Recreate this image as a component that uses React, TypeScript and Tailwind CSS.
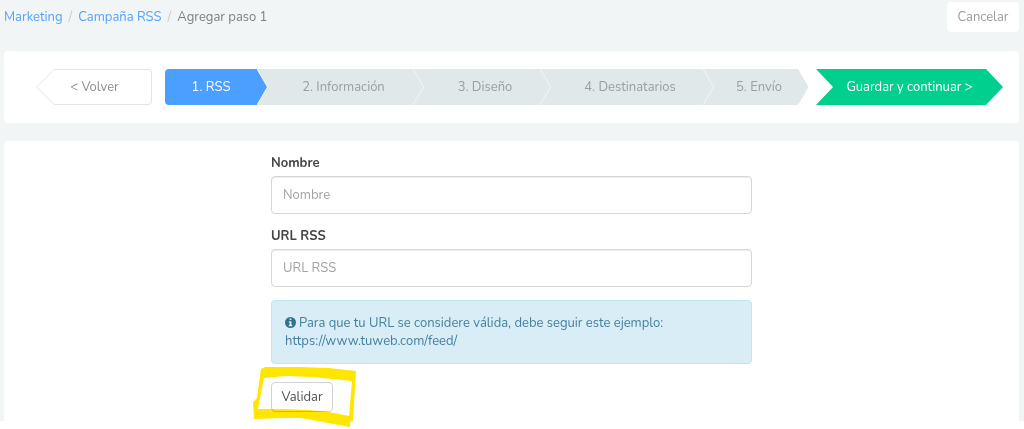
import React from 'react';

const steps = [
  { label: '1. RSS', active: true },
  { label: '2. Información', active: false },
  { label: '3. Diseño', active: false },
  { label: '4. Destinatarios', active: false },
  { label: '5. Envío', active: false },
];

const Breadcrumb: React.FC = () => (
  <nav aria-label="breadcrumb" className="pt-1.5">
    <ol className="flex gap-1.5">
      <li><a href="#marketing" className="text-[#55a2fb]">Marketing</a></li>
      <li className="text-[#c8cccd]">/</li>
      <li><a href="#campana" className="text-[#55a2fb]">Campaña RSS</a></li>
      <li className="text-[#c8cccd]">/</li>
      <li className="text-[#7c7f80]">Agregar paso 1</li>
    </ol>
  </nav>
);

const Wizard: React.FC = () => (
  <div className="flex items-center rounded bg-white py-[18px] pl-8 pr-4">
    <button type="button" className="flex h-9 w-[116px] shrink-0 text-[#8c8f90]">
      <svg className="h-9 w-[18px] shrink-0" viewBox="0 0 18 36" fill="none">
        <path d="M18 .5L.7 18 18 35.5" stroke="#e3e5e6" />
      </svg>
      <span className="flex h-9 flex-1 items-center justify-center rounded-r border border-l-0 border-[#e3e5e6] pr-4">&lt; Volver</span>
    </button>

    <ol className="ml-[13px] grid flex-1 grid-cols-[103fr_156fr_127fr_163fr_95fr]">
      {steps.map((step, index) => (
        <li key={step.label} className="flex h-9">
          <a
            href={`#paso-${index + 1}`}
            className={
              step.active
                ? 'flex flex-1 items-center justify-center rounded-l bg-[#4a9fff] text-white'
                : 'flex flex-1 items-center justify-center bg-[#e1e8ea] pl-1.5 text-[#9a9fa1]'
            }
          >
            {step.label}
          </a>
          {/* Arrow tip */}
          <svg
            className={index === steps.length - 1 ? 'h-9 w-[11px] shrink-0' : 'h-9 w-[11px] shrink-0 bg-[#e1e8ea]'}
            viewBox="0 0 11 36"
          >
            <path d="M0 0L10.5 18 0 36z" fill={step.active ? '#4a9fff' : '#e1e8ea'} />
            {index < steps.length - 1 && <path d="M0 0L10.5 18 0 36" fill="none" stroke="#f3f6f7" />}
          </svg>
        </li>
      ))}
    </ol>

    <button
      type="button"
      className="ml-[7px] h-9 w-[187px] shrink-0 bg-[#00cf8d] text-white [clip-path:polygon(0_0,170px_0,100%_50%,170px_100%,0_100%,17px_50%)]"
    >
      Guardar y continuar &gt;
    </button>
  </div>
);

// Hand-drawn marker around the validate button
const Highlight: React.FC = () => (
  <svg className="pointer-events-none absolute -top-4 -left-[18px] h-[62px] w-[104px] mix-blend-multiply" viewBox="0 0 104 62">
    <path
      fill="#ffe600"
      fillRule="evenodd"
      d="M8 3L12 1L46 1L76 2L103 5L102 22L100 55L97 56L97 61L86 59L48 52L30 52L1 53L0 36L4 32ZM11 12L34 10L59 11L99 15L96 50L76 46L56 44L30 43L5 43Z"
    />
  </svg>
);

const RssForm: React.FC = () => (
  <form className="mt-[18px] flex justify-center rounded-t bg-white pt-[13px] pb-[9px]">
    <div className="w-[481px] max-w-full">
      <label htmlFor="nombre" className="block font-bold text-[#444]">Nombre</label>
      <input
        id="nombre"
        type="text"
        placeholder="Nombre"
        className="mt-1 block h-[38px] w-full rounded border border-[#d4d6d7] px-[11px] shadow-[inset_0_1px_1px_rgba(0,0,0,0.075)] placeholder:text-[#a0a2a3]"
      />
      <label htmlFor="url" className="mt-[13px] block font-bold text-[#444]">URL RSS</label>
      <input
        id="url"
        type="text"
        placeholder="URL RSS"
        className="mt-1 block h-[38px] w-full rounded border border-[#d4d6d7] px-[11px] shadow-[inset_0_1px_1px_rgba(0,0,0,0.075)] placeholder:text-[#a0a2a3]"
      />
      <div className="mt-[13px] rounded border border-[#bce8f1] bg-[#d9edf7] p-[13px] text-[#4480a0]">
        <svg className="mr-[3px] inline-block size-[11px] align-[-1px]" viewBox="0 0 12 12">
          <circle cx="6" cy="6" r="6" fill="#31708f" />
          <path d="M5 1.5h2v1.7H5zM4.2 4.5H7v4h.9V10H4.2V8.5H5V6h-.8z" fill="#d9edf7" />
        </svg>
        Para que tu URL se considere válida, debe seguir este ejemplo:
        <br />
        https://www.tuweb.com/feed/
      </div>
      <div className="relative mt-[18px] w-fit">
        <button type="button" className="block h-[30px] w-[62px] rounded border border-[#d0d2d3] bg-white text-[#505354]">Validar</button>
        <Highlight />
      </div>
    </div>
  </form>
);

const App: React.FC = () => {
  return (
    <div className="min-h-screen bg-white font-[Nunito,Lato,sans-serif] text-[13px] leading-[18px]">
      <main className="bg-[#f1f5f6] pt-[2px] pr-[5px] pl-1">
        <header className="mb-[19px] flex items-start justify-between">
          <Breadcrumb />
          <button type="button" className="h-[30px] w-[72px] rounded bg-white text-[#9a9d9f]">Cancelar</button>
        </header>
        <Wizard />
        <RssForm />
      </main>
    </div>
  );
};

export default App;
